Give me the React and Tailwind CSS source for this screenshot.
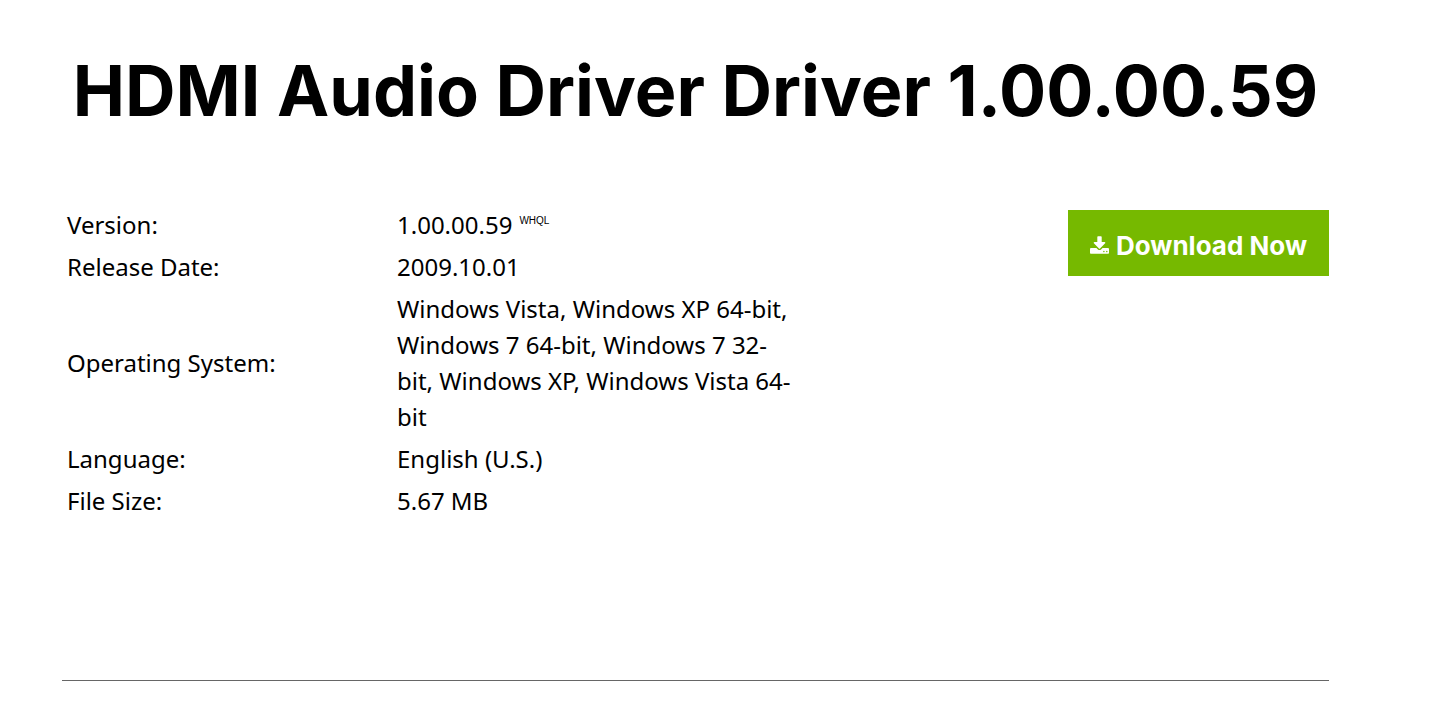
const details = [
  { label: "Version:", value: "1.00.00.59", note: "WHQL" },
  { label: "Release Date:", value: "2009.10.01" },
  {
    label: "Operating System:",
    value:
      "Windows Vista, Windows XP 64-bit, Windows 7 64-bit, Windows 7 32-bit, Windows XP, Windows Vista 64-bit",
  },
  { label: "Language:", value: "English (U.S.)" },
  { label: "File Size:", value: "5.67 MB" },
];

function DownloadIcon() {
  return (
    <svg viewBox="64 0 1664 1536" className="h-[18px] w-[19px]" fill="currentColor" aria-hidden="true">
      <path d="M1344 1344q0-26-19-45t-45-19-45 19-19 45 19 45 45 19 45-19 19-45zm256 0q0-26-19-45t-45-19-45 19-19 45 19 45 45 19 45-19 19-45zm128-224v320q0 40-28 68t-68 28h-1472q-40 0-68-28t-28-68v-320q0-40 28-68t68-28h465l135 136q58 56 136 56t136-56l136-136h464q40 0 68 28t28 68zm-325-569q17 41-14 70l-448 448q-18 19-45 19t-45-19l-448-448q-31-29-14-70 17-39 59-39h256v-448q0-26 19-45t45-19h256q26 0 45 19t19 45v448h256q42 0 59 39z" />
    </svg>
  );
}

function DriverDetails() {
  return (
    <table className="w-3/5 max-w-[740px] table-fixed text-left text-2xl leading-9">
      <colgroup>
        <col className="w-[330px]" />
        <col />
      </colgroup>
      <tbody>
        {details.map((row) => (
          <tr key={row.label}>
            <th scope="row" className="px-[5px] py-[3px] align-middle font-normal">
              {row.label}
            </th>
            <td className="px-[5px] py-[3px] align-middle">
              {row.value}
              {row.note && (
                <sup className="ml-[7px] align-[5px] font-['Liberation_Sans',sans-serif] text-[10px] leading-none">
                  {row.note}
                </sup>
              )}
            </td>
          </tr>
        ))}
      </tbody>
    </table>
  );
}

export default function App() {
  return (
    <main className="bg-white pr-[103px] pl-[62px] font-['Noto_Sans',sans-serif] text-black">
      <h1 className="pt-[46px] text-center font-['Inter',sans-serif] text-[70px] leading-[90px] font-bold whitespace-nowrap">
        HDMI Audio Driver Driver 1.00.00.59
      </h1>
      <section className="mt-[68px] flex items-start justify-between border-b border-[#666666] pb-[158px]">
        <DriverDetails />
        <a
          href="#download"
          className="mt-[6px] flex h-[66px] w-[261px] items-center justify-center gap-[7px] bg-[#76b900] pt-1 font-['Inter',sans-serif] text-[26px] font-bold whitespace-nowrap text-white"
        >
          <DownloadIcon />
          Download Now
        </a>
      </section>
    </main>
  );
}
